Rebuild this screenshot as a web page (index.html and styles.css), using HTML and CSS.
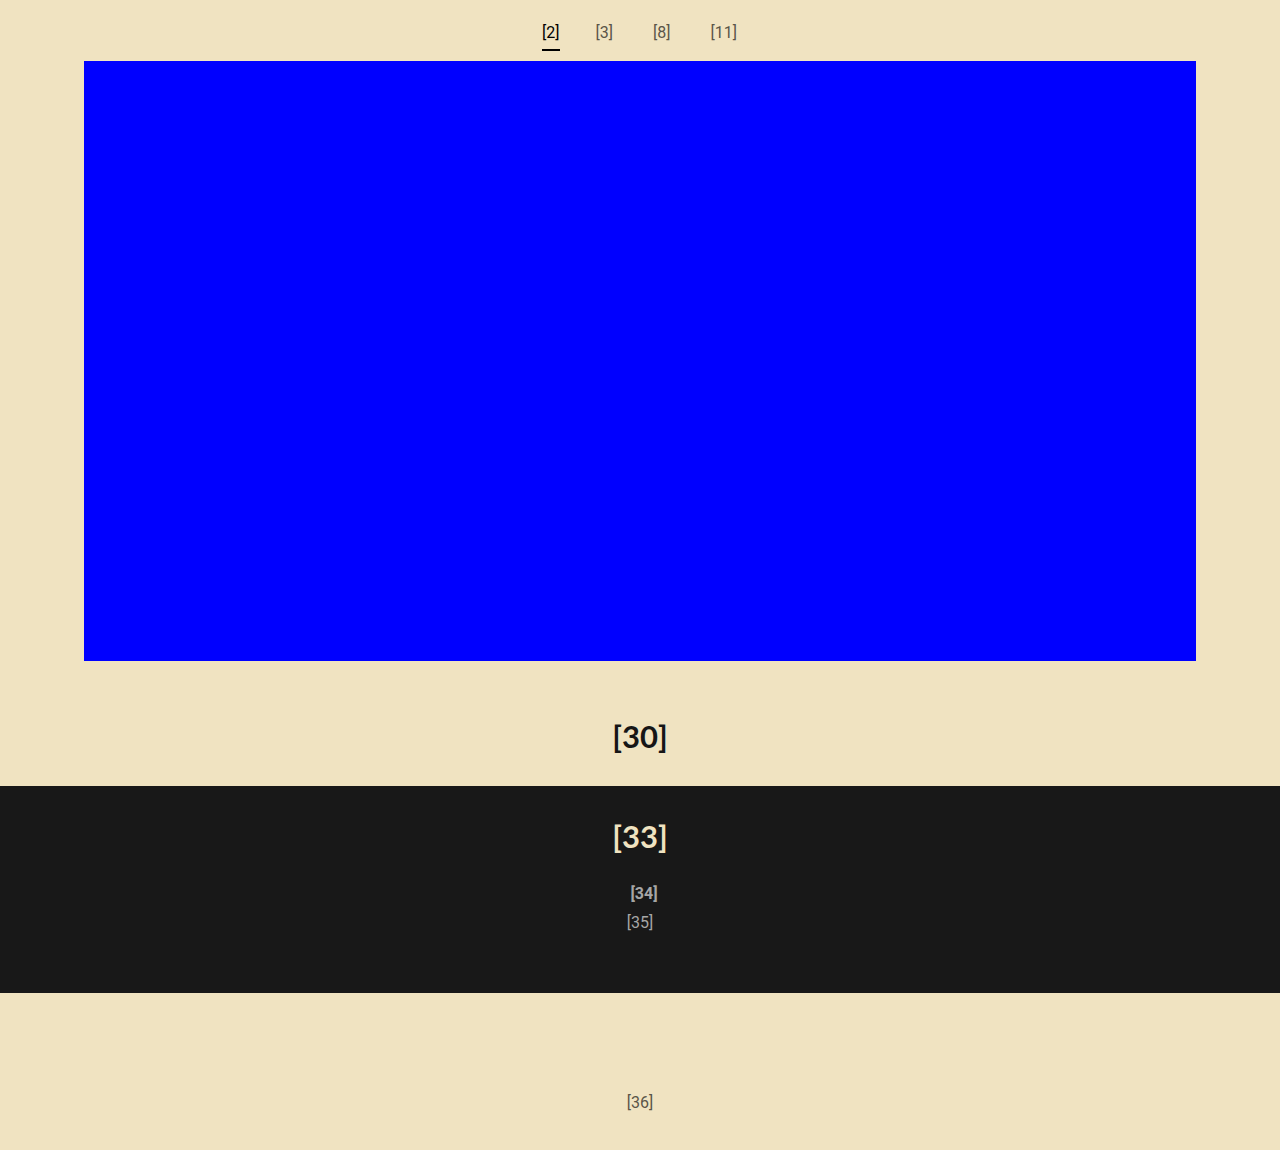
FILE: index.html
```html
<!DOCTYPE html>
<html>
<head>
<meta charset="utf-8">
<link rel="stylesheet" href="styles.css">
</head>
<body>
<nav class="tabs">
  <a class="tab active">[2]</a>
  <a class="tab">[3]</a>
  <a class="tab">[8]</a>
  <a class="tab">[11]</a>
</nav>
<div class="media"></div>
<section class="intro">
  <h2 class="title">[30]</h2>
</section>
<section class="dark">
  <h2 class="title light">[33]</h2>
  <div class="label">[34]</div>
  <div class="sub">[35]</div>
</section>
<footer class="footer">[36]</footer>
</body>
</html>
```
FILE: styles.css
```css
html, body {
  margin: 0;
  padding: 0;
  background: #f0e3c1;
  font-family: Roboto, "Liberation Sans", sans-serif;
}
.tabs {
  display: flex;
  justify-content: center;
  padding-top: 23px;
  margin-bottom: 10px;
  margin-left: -1px;
}
.tab {
  font-size: 16px;
  line-height: 20px;
  padding-bottom: 6px;
  border-bottom: 2px solid transparent;
  color: #5a5548;
  margin: 0 20px;
}
.tab.active {
  color: #000;
  border-bottom-color: #000;
  margin-right: 16px;
}
.media {
  margin: 0 84px;
  height: 600px;
  background: #0000ff;
}
.intro {
  padding: 57px 0 32px;
  text-align: center;
}
.title {
  margin: 0;
  font-family: Lato, "Noto Sans", sans-serif;
  font-weight: 700;
  font-size: 31px;
  line-height: 36px;
  color: #161616;
}
.title.light {
  color: #f0e3c1;
}
.dark {
  background: #181818;
  text-align: center;
  padding: 32px 0 60px;
}
.label {
  margin-top: 30px;
  font-weight: 700;
  font-size: 16px;
  line-height: 20px;
  color: #a6a6a6;
  padding-left: 8px;
}
.sub {
  margin-top: 9px;
  font-size: 16px;
  line-height: 20px;
  color: #a6a6a6;
}
.footer {
  padding: 100px 0 30px;
  text-align: center;
  font-size: 16px;
  line-height: 20px;
  color: #5a5548;
}
```
